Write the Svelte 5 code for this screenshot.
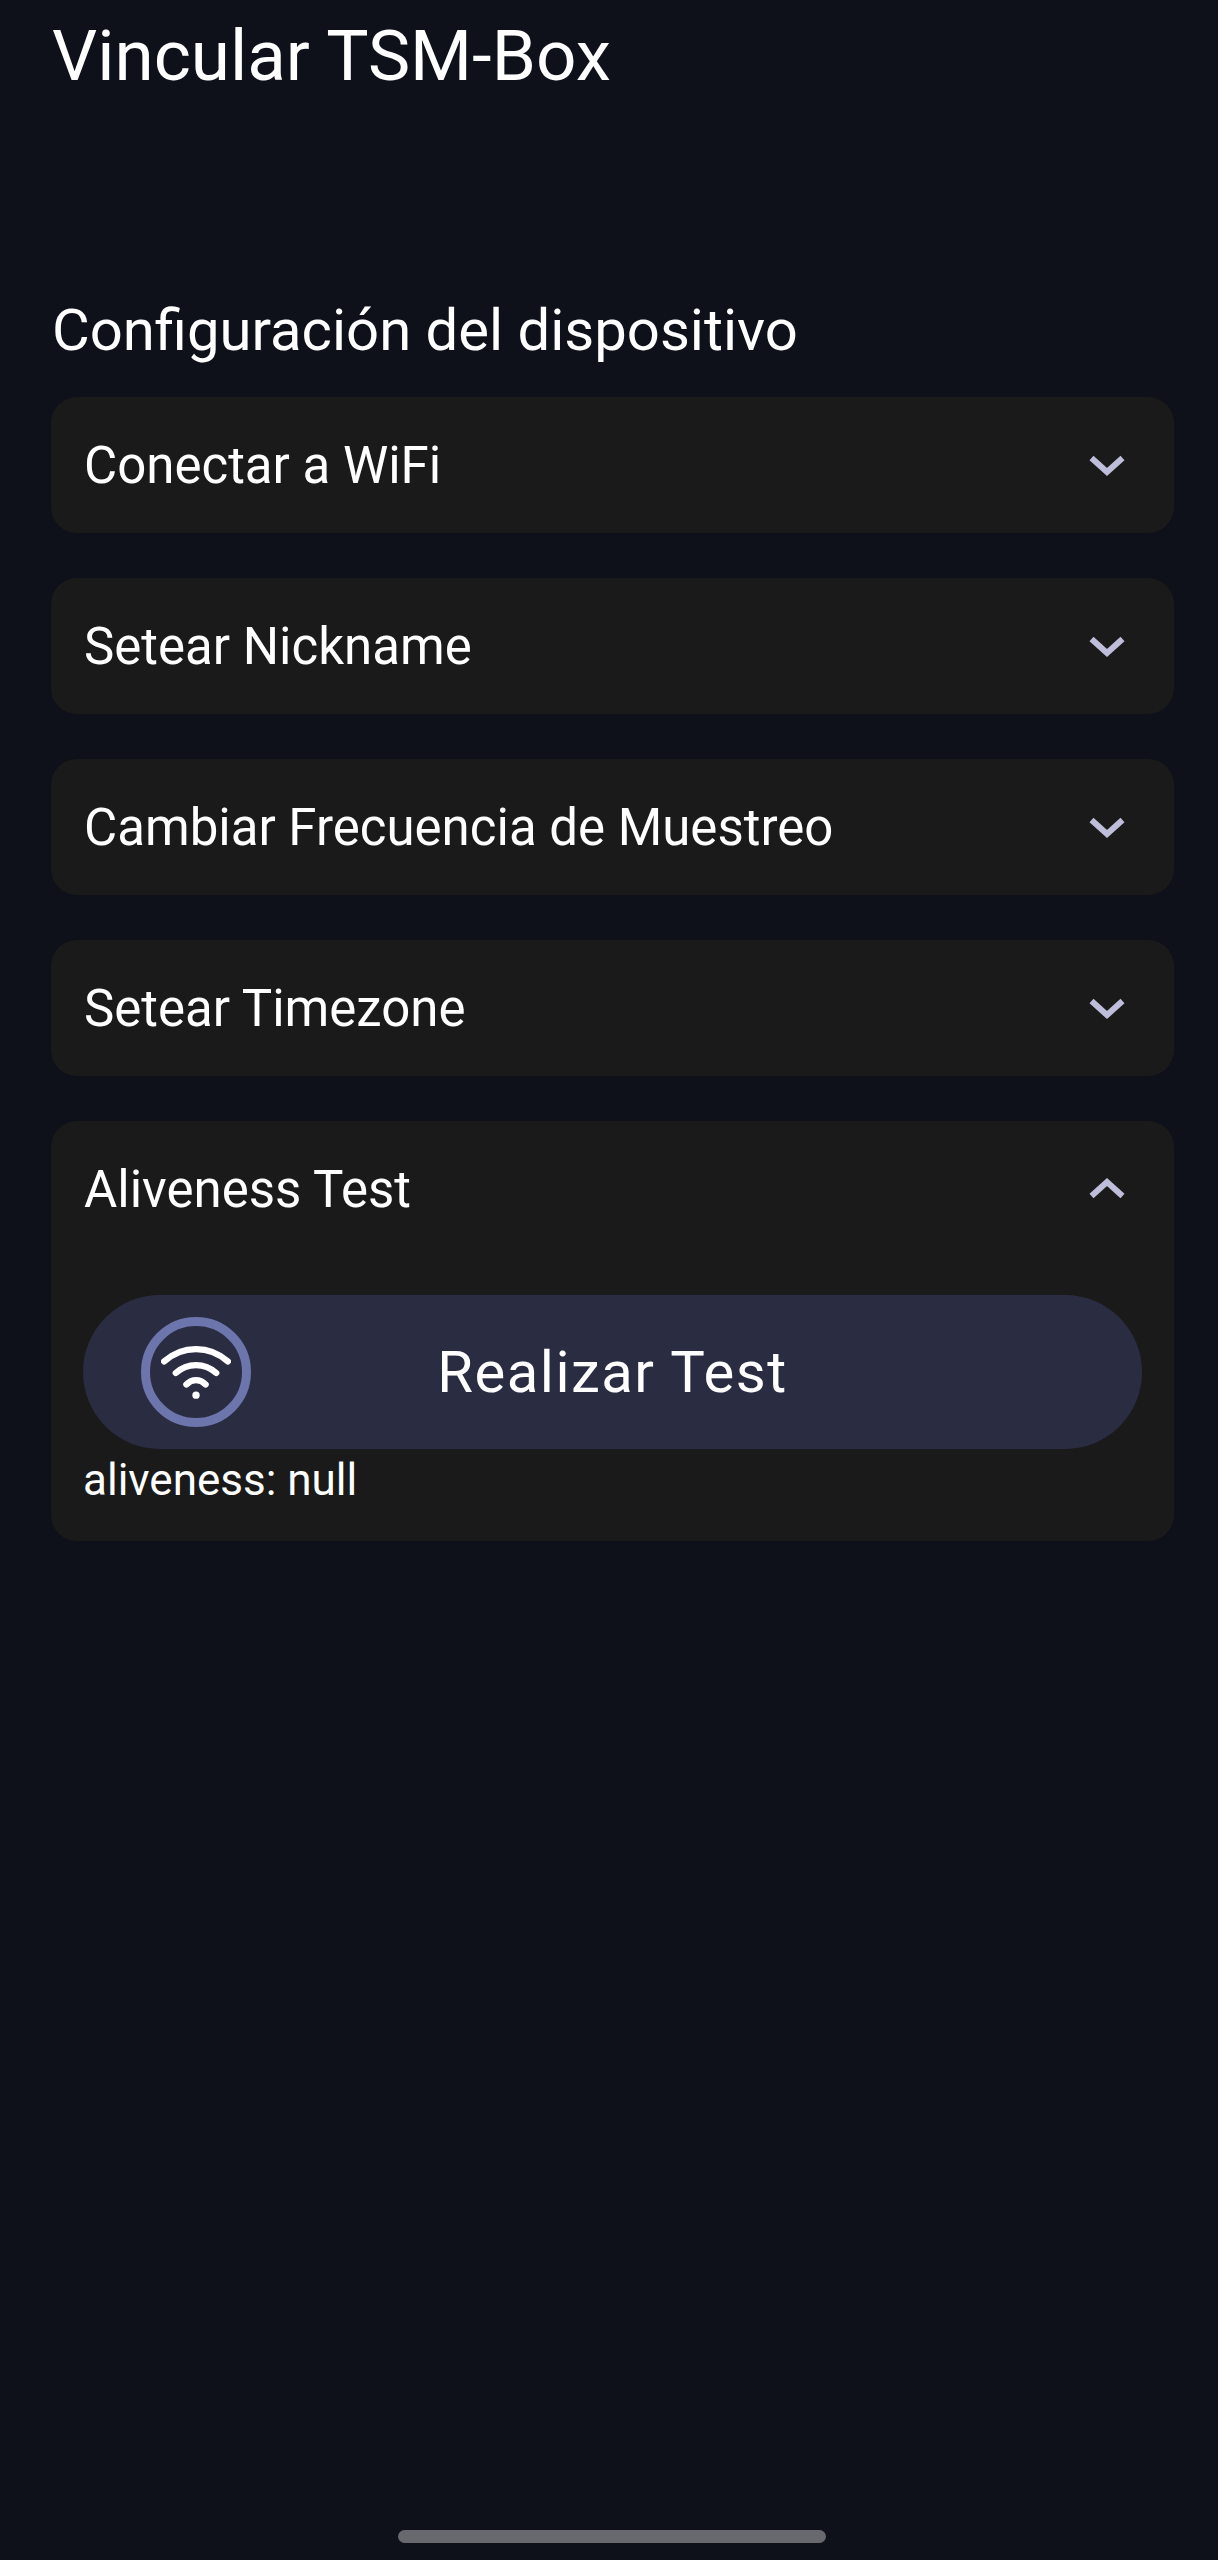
<script lang="ts">
    const sections = [
        "Conectar a WiFi",
        "Setear Nickname",
        "Cambiar Frecuencia de Muestreo",
        "Setear Timezone",
        "Aliveness Test",
    ];

    let openIndex = $state(4);
    let aliveness: string | null = $state(null);

    function toggle(index: number) {
        openIndex = openIndex === index ? -1 : index;
    }
</script>

<main class="screen">
    <h1>Vincular TSM-Box</h1>
    <h2>Configuración del dispositivo</h2>

    <div class="sections">
        {#each sections as title, i}
            <section class="card">
                <button class="card-header" onclick={() => toggle(i)}>
                    <span>{title}</span>
                    <svg class="chevron" class:up={openIndex === i} viewBox="0 0 36 24" aria-hidden="true">
                        <path d="M2.5 5 18 19 33.5 5" />
                    </svg>
                </button>
                {#if openIndex === i && i === 4}
                    <div class="card-body">
                        <button class="test-button">
                            <span class="ring">
                                <svg viewBox="0 0 72 56" aria-hidden="true">
                                    <path d="M3 17C22 0 50 0 69 17" />
                                    <path d="M15 29C27 18 45 18 57 29" />
                                    <path d="M26 41C32 35 40 35 46 41" />
                                    <circle cx="36" cy="52" r="3.8" />
                                </svg>
                            </span>
                            <span class="test-label">Realizar Test</span>
                        </button>
                        <p class="result">aliveness: {String(aliveness)}</p>
                    </div>
                {/if}
            </section>
        {/each}
    </div>

    <div class="home-bar"></div>
</main>

<style>
    :global(body) {
        background: #0e1119;
    }

    .screen {
        box-sizing: border-box;
        height: 2560px;
        padding: 0 44px 17px 51px;
        display: flex;
        flex-direction: column;
        font-family: Roboto, "Liberation Sans", sans-serif;
        color: #fff;
        background: #0e1119;
    }

    h1 {
        margin: 14px 0 0 1px;
        font-size: 71px;
        line-height: 84px;
        font-weight: 400;
    }

    h2 {
        margin: 198px 0 0 1px;
        font-size: 58px;
        line-height: 68px;
        font-weight: 400;
    }

    .sections {
        margin-top: 33px;
        display: flex;
        flex-direction: column;
        gap: 45px;
    }

    .card {
        background: #1a1a1a;
        border-radius: 26px;
    }

    .card-header {
        width: 100%;
        height: 136px;
        padding: 0 49px 0 33px;
        display: flex;
        align-items: center;
        justify-content: space-between;
        border: 0;
        background: none;
        color: inherit;
        font: inherit;
        font-size: 51px;
        text-align: left;
    }

    .chevron {
        width: 36px;
        height: 24px;
        fill: none;
        stroke: #bebedb;
        stroke-width: 6;
    }

    .chevron.up {
        transform: rotate(180deg);
    }

    .card-body {
        box-sizing: border-box;
        height: 284px;
        padding: 38px 32px 0;
    }

    .test-button {
        width: 100%;
        height: 154px;
        padding: 0 58px;
        display: grid;
        grid-template-columns: 1fr auto 1fr;
        align-items: center;
        border: 0;
        border-radius: 77px;
        background: #2a2c42;
        color: #fff;
        font: inherit;
    }

    .ring {
        box-sizing: border-box;
        width: 110px;
        height: 110px;
        border: 9.5px solid #6c75ac;
        border-radius: 50%;
        display: flex;
        align-items: center;
        justify-content: center;
    }

    .ring svg {
        width: 70px;
        height: 54px;
        fill: none;
        stroke: #fff;
        stroke-width: 6.5;
        stroke-linecap: round;
    }

    .ring circle {
        fill: #fff;
        stroke: none;
    }

    .test-label {
        font-size: 58px;
        letter-spacing: 1.5px;
    }

    .result {
        margin: 0;
        font-size: 44px;
        line-height: 62px;
    }

    .home-bar {
        width: 428px;
        height: 13px;
        margin: auto auto 0;
        border-radius: 7px;
        background: #68686f;
        transform: translateX(-1px);
    }
</style>
